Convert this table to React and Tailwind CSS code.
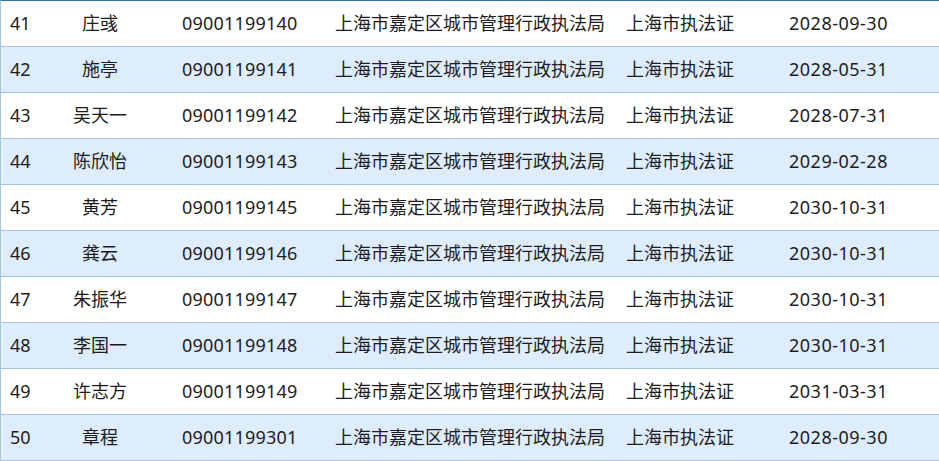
const rows = [
  ['41', '庄彧', '09001199140', '2028-09-30'],
  ['42', '施亭', '09001199141', '2028-05-31'],
  ['43', '吴天一', '09001199142', '2028-07-31'],
  ['44', '陈欣怡', '09001199143', '2029-02-28'],
  ['45', '黄芳', '09001199145', '2030-10-31'],
  ['46', '龚云', '09001199146', '2030-10-31'],
  ['47', '朱振华', '09001199147', '2030-10-31'],
  ['48', '李国一', '09001199148', '2030-10-31'],
  ['49', '许志方', '09001199149', '2031-03-31'],
  ['50', '章程', '09001199301', '2028-09-30'],
];

export default function App() {
  return (
    <div
      className="w-[939px] h-[461px] bg-white overflow-hidden text-[#1c1c1c] text-[18px]"
      style={{ fontFamily: '"Noto Sans", "Noto Sans CJK SC", sans-serif' }}
    >
      <div className="border-t border-t-[#3d6b9c] border-l border-l-[#a9c6e0]">
        {rows.map((r, i) => (
          <div
            key={r[0]}
            className={`flex items-center h-[46px] border-b border-b-[#a9c6e0] ${
              i % 2 === 1 ? 'bg-[#deedfd]' : 'bg-white'
            }`}
          >
            <div className="w-[59px] pl-[9px]">{r[0]}</div>
            <div className="w-[80px] text-center">{r[1]}</div>
            <div className="w-[195px] pl-[42px] tracking-[0.2px]">{r[2]}</div>
            <div className="w-[291px]">上海市嘉定区城市管理行政执法局</div>
            <div className="w-[163px]">上海市执法证</div>
            <div className="flex-1 tracking-[0.5px]">{r[3]}</div>
          </div>
        ))}
      </div>
    </div>
  );
}
